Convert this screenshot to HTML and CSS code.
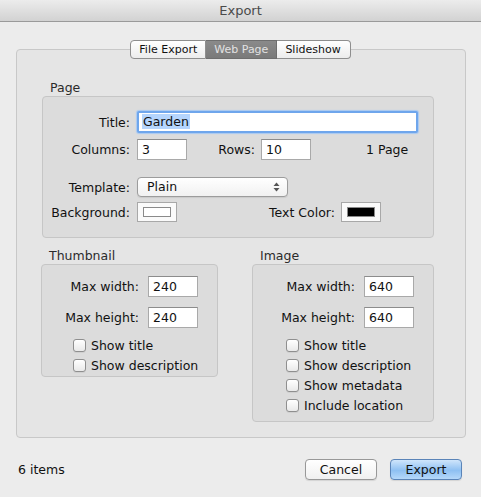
FILE: index.html
```html
<!DOCTYPE html>
<html lang="en">
<head>
    <meta charset="UTF-8">
    <title>Export</title>
    <link rel="stylesheet" href="styles.css">
</head>
<body>
    <div class="window">
        <div class="titlebar">Export</div>

        <div class="tabs">
            <span class="tab">File Export</span>
            <span class="tab tab-active">Web Page</span>
            <span class="tab">Slideshow</span>
        </div>

        <div class="tab-panel">
            <!-- Page -->
            <div class="group-label">Page</div>
            <div class="group page-group">
                <div class="row row-title">
                    <span class="label page-label">Title:</span>
                    <div class="field field-title"><span class="selection">Garden</span></div>
                </div>
                <div class="row row-grid">
                    <span class="label page-label">Columns:</span>
                    <div class="field field-small">3</div>
                    <span class="label rows-label">Rows:</span>
                    <div class="field field-small">10</div>
                    <span class="page-count">1 Page</span>
                </div>
                <div class="row row-template">
                    <span class="label page-label">Template:</span>
                    <div class="popup">
                        Plain
                        <svg class="popup-arrows" width="7" height="10" viewBox="0 0 7 10">
                            <path d="M0.5 4 L3.5 0.5 L6.5 4 Z" fill="#555"/>
                            <path d="M0.5 6 L3.5 9.5 L6.5 6 Z" fill="#555"/>
                        </svg>
                    </div>
                </div>
                <div class="row row-colors">
                    <span class="label page-label">Background:</span>
                    <div class="well"><div class="swatch swatch-white"></div></div>
                    <span class="label textcolor-label">Text Color:</span>
                    <div class="well"><div class="swatch swatch-black"></div></div>
                </div>
            </div>

            <div class="columns">
                <!-- Thumbnail -->
                <div class="column thumb-column">
                    <div class="group-label">Thumbnail</div>
                    <div class="group thumb-group">
                        <div class="row row-size">
                            <span class="label thumb-label">Max width:</span>
                            <div class="field field-small">240</div>
                        </div>
                        <div class="row row-size row-size-next">
                            <span class="label thumb-label">Max height:</span>
                            <div class="field field-small">240</div>
                        </div>
                        <div class="checks thumb-checks">
                            <label class="check"><span class="checkbox"></span>Show title</label>
                            <label class="check"><span class="checkbox"></span>Show description</label>
                        </div>
                    </div>
                </div>

                <!-- Image -->
                <div class="column image-column">
                    <div class="group-label">Image</div>
                    <div class="group image-group">
                        <div class="row row-size">
                            <span class="label image-label">Max width:</span>
                            <div class="field field-small">640</div>
                        </div>
                        <div class="row row-size row-size-next">
                            <span class="label image-label">Max height:</span>
                            <div class="field field-small">640</div>
                        </div>
                        <div class="checks image-checks">
                            <label class="check"><span class="checkbox"></span>Show title</label>
                            <label class="check"><span class="checkbox"></span>Show description</label>
                            <label class="check"><span class="checkbox"></span>Show metadata</label>
                            <label class="check"><span class="checkbox"></span>Include location</label>
                        </div>
                    </div>
                </div>
            </div>
        </div>

        <div class="footer">
            <span class="item-count">6 items</span>
            <button class="button">Cancel</button>
            <button class="button button-default">Export</button>
        </div>
    </div>
</body>
</html>
```

FILE: styles.css
```css
* {
    margin: 0;
    padding: 0;
    box-sizing: border-box;
}

body {
    width: 481px;
    height: 497px;
    font-family: "Lucida Grande", "DejaVu Sans", sans-serif;
    font-size: 12.5px;
    color: #111;
    background: #ececec;
    overflow: hidden;
}

.window {
    display: flex;
    flex-direction: column;
    height: 100%;
}

.titlebar {
    height: 22px;
    line-height: 21px;
    text-align: center;
    font-size: 13px;
    color: #4a4a4a;
    background: linear-gradient(#ececec, #d2d2d2);
    border-bottom: 1px solid #9a9a9a;
}

/* Tabs */
.tabs {
    display: flex;
    justify-content: center;
    margin-top: 18px;
    position: relative;
    z-index: 1;
}

.tab {
    height: 19px;
    line-height: 17px;
    font-size: 11px;
    padding: 0 8px;
    border: 1px solid #8e8e8e;
    border-left: none;
    background: linear-gradient(#ffffff, #ececec);
    color: #111;
}

.tab:first-child {
    border-left: 1px solid #8e8e8e;
    border-radius: 4px 0 0 4px;
}

.tab:last-child {
    border-radius: 0 4px 4px 0;
    padding: 0 9px 0 8px;
}

.tab-active {
    background: linear-gradient(#8a8a8a, #7a7a7a);
    color: #e2e2e2;
    border-color: #6e6e6e;
}

/* Tab panel */
.tab-panel {
    margin: -10px 15px 0 16px;
    height: 389px;
    border: 1px solid #c8c8c8;
    border-radius: 4px;
    background: #e5e5e5;
    padding: 31px 31px 0 25px;
}

.group-label {
    height: 14px;
    line-height: 14px;
    padding-left: 8px;
    color: #2b2b2b;
    margin-bottom: 1px;
}

.group {
    border: 1px solid #c6c6c6;
    border-radius: 4px;
    background: #dcdcdc;
}

.row {
    display: flex;
    align-items: center;
}

.label {
    text-align: right;
    flex-shrink: 0;
    white-space: nowrap;
}

/* Page group */
.page-group {
    padding: 14px 0 15px;
}

.page-label {
    width: 87px;
    margin-right: 7px;
}

.row-title {
    height: 22px;
}

.row-grid {
    height: 21px;
    margin-top: 6px;
}

.row-template {
    height: 20px;
    margin-top: 17px;
}

.row-colors {
    height: 20px;
    margin-top: 5px;
}

.field {
    background: #fff;
    border: 1px solid #a9a9a9;
    border-top-color: #8c8c8c;
    padding-left: 4px;
    font-size: 12.5px;
    line-height: 19px;
    height: 21px;
}

.field-title {
    width: 281px;
    height: 22px;
    border: 2px solid #6fa6ec;
    box-shadow: 0 0 1px 1px #a8c9f2;
    border-radius: 2px;
    padding-left: 3px;
    line-height: 18px;
}

.selection {
    background: #b5d5fd;
    padding: 0 1px;
}

.field-small {
    width: 50px;
}

.rows-label {
    width: 68px;
    margin-right: 6px;
}

.page-count {
    margin-left: 55px;
}

.popup {
    position: relative;
    width: 151px;
    height: 20px;
    line-height: 18px;
    padding-left: 9px;
    border: 1px solid #9c9c9c;
    border-radius: 4px;
    background: linear-gradient(#ffffff, #f1f1f1);
    box-shadow: 0 1px 1px rgba(0, 0, 0, 0.08);
}

.popup-arrows {
    position: absolute;
    right: 7px;
    top: 4px;
}

.well {
    width: 40px;
    height: 20px;
    border: 1px solid #a8a8a8;
    background: #fafafa;
    padding: 4px 5px;
}

.swatch {
    width: 100%;
    height: 100%;
    border: 1px solid #8a8a8a;
}

.swatch-white {
    background: #fff;
}

.swatch-black {
    background: #000;
}

.textcolor-label {
    width: 158px;
    margin-right: 6px;
}

/* Thumbnail + Image */
.columns {
    display: flex;
    align-items: flex-start;
    gap: 34px;
    margin-top: 11px;
}

.thumb-column {
    width: 177px;
    margin-left: -1px;
}

.image-column {
    width: 182px;
}

.thumb-group {
    padding: 11px 0 1px;
}

.image-group {
    padding: 11px 0 6px;
}

.row-size {
    height: 21px;
}

.row-size-next {
    margin-top: 10px;
    height: 20px;
}

.thumb-label {
    width: 97px;
    margin-right: 9px;
}

.image-label {
    width: 102px;
    margin-right: 9px;
}

.checks {
    margin-top: 8px;
}

.thumb-checks {
    padding-left: 31px;
}

.image-checks {
    padding-left: 33px;
}

.check {
    display: flex;
    align-items: center;
    height: 20px;
    gap: 5px;
}

.checkbox {
    width: 13px;
    height: 13px;
    border: 1px solid #8f8f8f;
    border-radius: 3px;
    background: linear-gradient(#ffffff, #e9e9e9);
    box-shadow: 0 1px 0 rgba(0, 0, 0, 0.06);
}

/* Footer */
.footer {
    display: flex;
    align-items: center;
    padding: 21px 19px 0 18px;
}

.item-count {
    flex: 1;
    line-height: 21px;
}

.button {
    width: 72px;
    height: 21px;
    font-family: inherit;
    font-size: 12.5px;
    color: #111;
    border: 1px solid #989898;
    border-radius: 4px;
    background: linear-gradient(#ffffff, #f0f0f0);
    box-shadow: 0 1px 1px rgba(0, 0, 0, 0.1);
}

.button-default {
    margin-left: 13px;
    border-color: #5a84b8;
    background: linear-gradient(#cfe5fb, #8ec0f2 55%, #b5d8fa);
}
```
